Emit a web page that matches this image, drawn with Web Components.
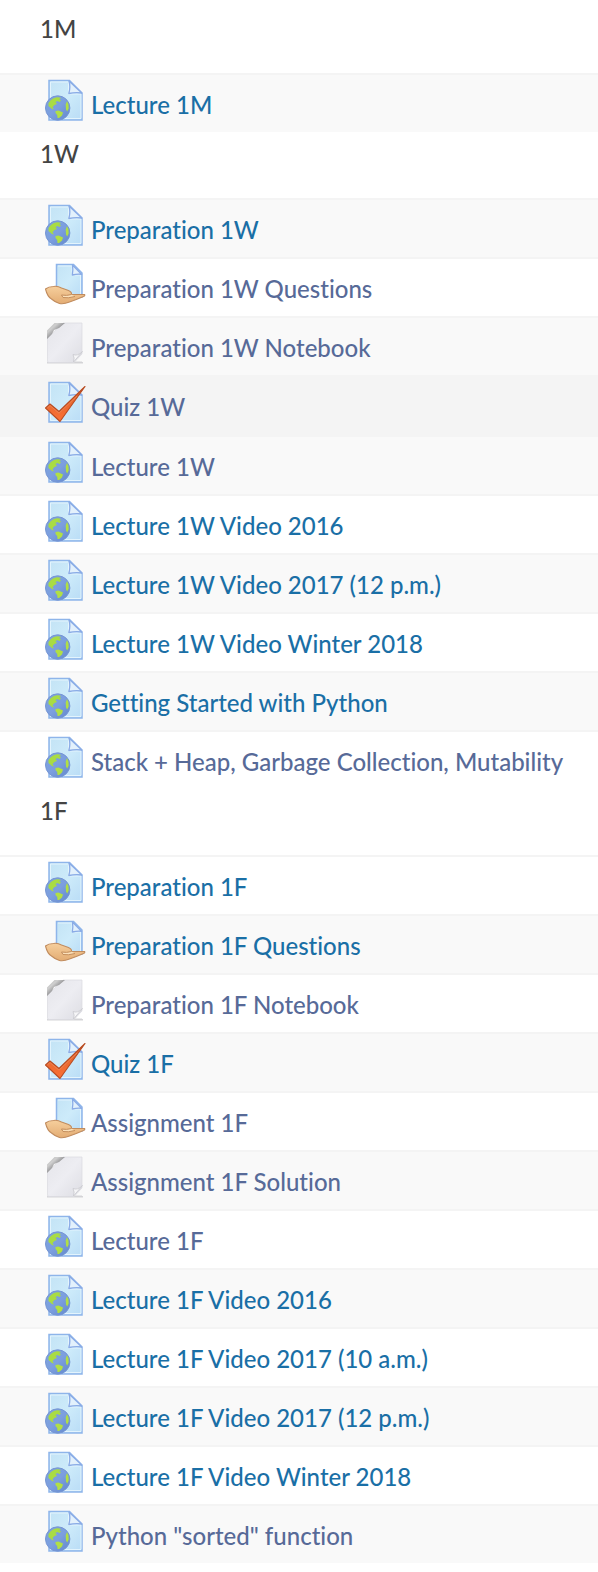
<!DOCTYPE html>
<html lang="en">
<head>
<meta charset="utf-8">
<title>Course materials</title>
<style>
body { margin: 0; background: #fff; font-family: Lato, "Liberation Sans", sans-serif; font-weight: 500; font-variant-ligatures: none; color: #444; }
</style>
</head>
<body>
<course-outline>
  <section-title>1M</section-title>
  <course-item kind="web">Lecture 1M</course-item>
  <section-title>1W</section-title>
  <course-item kind="web">Preparation 1W</course-item>
  <course-item kind="task" seen>Preparation 1W Questions</course-item>
  <course-item kind="file" seen>Preparation 1W Notebook</course-item>
  <course-item kind="quiz" seen current>Quiz 1W</course-item>
  <course-item kind="web" seen>Lecture 1W</course-item>
  <course-item kind="web">Lecture 1W Video 2016</course-item>
  <course-item kind="web">Lecture 1W Video 2017 (12 p.m.)</course-item>
  <course-item kind="web">Lecture 1W Video Winter 2018</course-item>
  <course-item kind="web">Getting Started with Python</course-item>
  <course-item kind="web" seen>Stack + Heap, Garbage Collection, Mutability</course-item>
  <section-title>1F</section-title>
  <course-item kind="web">Preparation 1F</course-item>
  <course-item kind="task">Preparation 1F Questions</course-item>
  <course-item kind="file" seen>Preparation 1F Notebook</course-item>
  <course-item kind="quiz">Quiz 1F</course-item>
  <course-item kind="task" seen>Assignment 1F</course-item>
  <course-item kind="file" seen>Assignment 1F Solution</course-item>
  <course-item kind="web" seen>Lecture 1F</course-item>
  <course-item kind="web">Lecture 1F Video 2016</course-item>
  <course-item kind="web">Lecture 1F Video 2017 (10 a.m.)</course-item>
  <course-item kind="web">Lecture 1F Video 2017 (12 p.m.)</course-item>
  <course-item kind="web">Lecture 1F Video Winter 2018</course-item>
  <course-item kind="web" seen>Python "sorted" function</course-item>
</course-outline>

<script>
const define = (name, markup, setup) => {
  const template = document.createElement('template');
  template.innerHTML = markup;
  customElements.define(name, class extends HTMLElement {
    constructor() {
      super();
      this.attachShadow({ mode: 'open' }).append(template.content.cloneNode(true));
    }
    connectedCallback() { if (setup) setup(this); }
  });
};

const defs = `<defs>
  <linearGradient id="sheet" x1="0" y1="0" x2="1" y2="1"><stop stop-color="#c3e3f5"/><stop offset=".5" stop-color="#cdebfa"/><stop offset="1" stop-color="#b9dcf6"/></linearGradient>
  <linearGradient id="sea" x1="0" y1="0" x2="1" y2="1"><stop stop-color="#7da2dc"/><stop offset=".5" stop-color="#7c9fdf"/><stop offset="1" stop-color="#6288cb"/></linearGradient>
  <linearGradient id="skin" x1="0" y1="0" x2="0" y2="1"><stop stop-color="#f6cf9d"/><stop offset="1" stop-color="#e3ac73"/></linearGradient>
  <linearGradient id="tick" x1="0" y1="0" x2="0" y2="1"><stop stop-color="#d9622e"/><stop offset="1" stop-color="#fb7034"/></linearGradient>
  <linearGradient id="paper" x1="0" y1="0" x2="1" y2="1"><stop stop-color="#e5e5ea"/><stop offset=".5" stop-color="#ededf2"/><stop offset="1" stop-color="#dddde3"/></linearGradient>
  <linearGradient id="corner" x1="0" y1="0" x2="1" y2="1"><stop stop-color="#b5b5b5"/><stop offset=".3" stop-color="#cfcfcf"/><stop offset=".5" stop-color="#9b9b9d"/></linearGradient>
</defs>`;

const page = `<path d="M9 5.500h20.500L42 18v27H9z" fill="url(#sheet)" stroke="#8eb5ea" stroke-width="1.500"/>
  <path d="M10.500 7h18v12h12.500v24.500H10.500z" fill="none" stroke="#e3f4fd" stroke-width="1"/>
  <path d="M29 6q1.800 6-.2 12.500q7-1.500 13-.5z" fill="#e3f1fc" stroke="#8aabe6" stroke-width="1.300" stroke-linejoin="round"/>`;

const art = {
  web: page + `<circle cx="17.700" cy="33" r="12.200" fill="url(#sea)" stroke="#7696d4"/>
    <path d="M8.500 28q2-3.500 5.500-5l3-.8 3 .3 1 1-2 .5 2 1.500-1.500 1.500-2-1-2 1 1.500 2-2.500 1-2 2.200 1.500 2.300-2-.5-3.500-3z" fill="#a9dc43"/>
    <path d="M15.500 36l3-.5 4.500 2-1 3-3 2.500h-1.500l-.3-3-1.700-2zM27 26l1.500 3.500.2 4-1.500 3-1.200-2-.3-5z" fill="#b1df45"/>`,
  task: `<g transform="translate(0 1)"><path d="M16.500 4.500h17L42 13v24H16.500z" fill="url(#sheet)" stroke="#8eb5ea" stroke-width="1.500"/>
    <path d="M18 6h14v9h8.500v20" fill="none" stroke="#e3f4fd"/>
    <path d="M32.500 5q.8 5-.2 10q5-1.200 9.200-.7z" fill="#e3f1fc" stroke="#8aabe6" stroke-width="1.300" stroke-linejoin="round"/>
    <path d="M5.500 29q3-2.500 8-2.500 4-.8 8 1.500l7 2.500q3.500 1.500 3 4h13q1 1-1 2-8 3.500-14 5.500-6 2.500-10 1.500-4-1-8-4.500-4-2-6-10z" fill="url(#skin)" stroke="#c18c5e" stroke-width="1.100" stroke-linejoin="round"/>
    <path d="M31.500 34.500q-5 1.500-10 .5l1.500 2.500q5 1 12-1" fill="#fbe0b9" stroke="#c38e5d"/></g>`,
  file: `<path d="M8 44h34l1 1H7z" fill="#cccdd0" stroke="#d5d5d8"/>
    <path d="M7.500 20L23 5h19v31l-8 8.500H9q-1.500 0-1.500-1.500z" fill="url(#paper)" stroke="#dadadf" stroke-width=".7"/>
    <path d="M7 21v-8.500L14.500 5H25l-6 5-5 2-2 4z" fill="url(#corner)"/>
    <path d="M33.500 44q1.500-4-.5-7.500 4.500 2 9.500-3z" fill="#f6f6f8" stroke="#c9c9ce" stroke-width=".8"/>`,
  quiz: page + `<path d="M5.500 31l4.500-4 9 7.500L45 9.500 20 44.500z" fill="url(#tick)" stroke="#b84c22" stroke-width="1.100" stroke-linejoin="round"/>
    <path d="M7.500 30.800l2.500-2.200 9 7.600L37 19" fill="none" stroke="#ec8453" stroke-width="1"/>`
};

define('course-outline', `<style>
  :host { display: block; padding-top: 7px; }
  ::slotted(course-item:nth-child(even)) { --row: #f9f9f9; }
</style><slot></slot>`, el => el.setAttribute('role', 'list'));

define('section-title', `<style>
  :host { display: block; padding: 7px 40px 29px; }
  h2 { margin: 0; font-size: 24px; line-height: 30px; font-weight: 500; }
</style><h2><slot></slot></h2>`);

define('course-item', `<style>
  :host { display: block; background: var(--row, #fff); border-top: 2px solid #f4f4f4; }
  :host([current]) { background: #f4f4f4; border-bottom: 1px solid #f4f4f4; }
  a { display: flex; align-items: flex-start; gap: 1px; padding: 0 20px 7px 40px; color: #1a6fa6; text-decoration: none; font-size: 24px; line-height: 30px; }
  :host([seen]) a { color: #576a98; }
  svg { flex: none; width: 50px; height: 50px; }
  span { padding-top: 15px; }
</style><a href="#"><svg viewBox="0 0 50 50" aria-hidden="true"></svg><span><slot></slot></span></a>`, el => {
  el.setAttribute('role', 'listitem');
  el.shadowRoot.querySelector('svg').innerHTML = defs + art[el.getAttribute('kind')];
});
</script>
</body>
</html>
